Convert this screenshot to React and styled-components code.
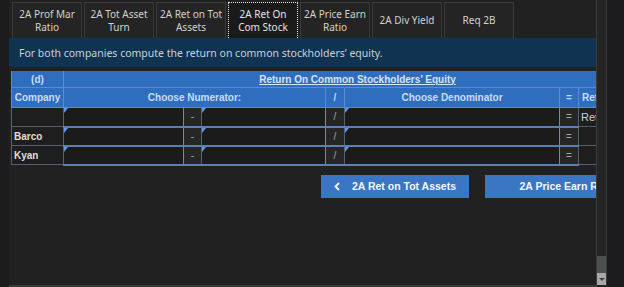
import React from "react";
import styled, { createGlobalStyle } from "styled-components";

const Global = createGlobalStyle`
  html, body { margin: 0; padding: 0; background: #1c1c1f; }
  body { width: 624px; height: 287px; overflow: hidden; }
`;

const Frame = styled.div`
  display: flex;
  width: 624px;
  height: 287px;
  background: #1c1c1f;
`;

const Panel = styled.div`
  width: 587px;
  margin-left: 9px;
  height: 285px;
  background: #212121;
  border-bottom: 2px solid #3a3a3a;
  overflow: hidden;
`;

const Tabs = styled.div`
  display: flex;
  gap: 2px;
  padding: 2px 0 0 3px;
  height: 36px;
`;

const Tab = styled.div`
  width: 70px;
  box-sizing: border-box;
  display: flex;
  align-items: center;
  justify-content: center;
  text-align: center;
  font-family: "Noto Sans", sans-serif;
  font-size: 10px;
  line-height: 13px;
  color: ${(p) => (p.active ? "#e4e4e4" : "#d2d2d2")};
  background: ${(p) => (p.active ? "#1a1a1a" : "#242424")};
  border: ${(p) => (p.active ? "1px dotted #e8e8e8" : "1px solid #3a3a3a")};
  border-bottom: none;
`;

const Banner = styled.div`
  height: 29px;
  display: flex;
  align-items: center;
  padding-left: 10px;
  background: #0f3350;
  color: #c8d2dc;
  font-family: "Noto Sans", sans-serif;
  font-size: 10.5px;
`;

const Table = styled.table`
  margin: 4px 0 0 2px;
  border-collapse: collapse;
  table-layout: fixed;
  width: 640px;
  font-family: "Liberation Sans", Arial, sans-serif;
  font-size: 10px;
  font-weight: bold;
`;

const Head = styled.th`
  background: #2f6ebf;
  color: #cbdcf2;
  height: ${(p) => p.h || 19}px;
  padding: 0;
  text-align: ${(p) => (p.left ? "left" : "center")};
  padding-left: ${(p) => (p.left ? "3px" : "0")};
  border: 1px solid #5c8ad0;
  border-top: none;
`;

const Title = styled.span`
  color: #d6e4f5;
  text-decoration: underline;
`;

const NameCell = styled.td`
  height: 18px;
  padding: 0 0 0 2px;
  background: #1e1e1e;
  color: #dedede;
  border: 1px solid #55606e;
`;

const OpCell = styled.td`
  background: #262626;
  color: #a8a8a8;
  text-align: center;
  font-weight: normal;
  border: 1px solid #55606e;
  border-bottom: 2px solid #5a80b4;
  padding: 0;
`;

const InputCell = styled.td`
  position: relative;
  background: #1b1b1b;
  border: 1px solid #5d8cc8;
  border-bottom: 2px solid #5a80b4;
  padding: 0;
  &::before {
    content: "";
    position: absolute;
    left: 0;
    top: 0;
    border-top: 5px solid #5e9ae6;
    border-right: 4px solid transparent;
  }
`;

const RetCell = styled.td`
  background: #1e1e1e;
  color: #cfcfcf;
  border: 1px solid #55606e;
  padding-left: 2px;
  font-weight: normal;
  font-size: 11px;
`;

const Nav = styled.div`
  display: flex;
  gap: 16px;
  padding: 9px 0 0 312px;
`;

const NavButton = styled.div`
  flex: none;
  width: ${(p) => p.w}px;
  height: 23px;
  display: flex;
  align-items: center;
  justify-content: center;
  gap: 12px;
  background: #3a76c3;
  color: #f2f6fb;
  font-family: "Liberation Sans", Arial, sans-serif;
  font-size: 10.5px;
  font-weight: bold;
`;

const Chevron = styled.svg`
  width: 6px;
  height: 9px;
  flex: none;
`;

const Scrollbar = styled.div`
  width: 9px;
  height: 287px;
  display: flex;
  flex-direction: column;
  background: #252525;
  border-left: 1px solid #3c3c3c;
  border-right: 1px solid #3c3c3c;
`;

const Track = styled.div`
  flex: 1;
`;

const Thumb = styled.div`
  height: 17px;
  background: #4a5150;
`;

const Arrow = styled.div`
  height: 12px;
  margin-bottom: 2px;
  background: #a8a8a8;
  display: flex;
  align-items: center;
  justify-content: center;
  &::after {
    content: "";
    border-top: 3px solid #444;
    border-left: 3px solid transparent;
    border-right: 3px solid transparent;
  }
`;

const tabs = [
  ["2A Prof Mar", "Ratio"],
  ["2A Tot Asset", "Turn"],
  ["2A Ret on Tot", "Assets"],
  ["2A Ret On", "Com Stock"],
  ["2A Price Earn", "Ratio"],
  ["2A Div Yield"],
  ["Req 2B"],
];

const rows = ["", "Barco", "Kyan"];

const ChevronIcon = ({ dir }) => (
  <Chevron viewBox="0 0 6 9">
    <path
      d={dir === "left" ? "M5 1 L1.5 4.5 L5 8" : "M1 1 L4.5 4.5 L1 8"}
      fill="none"
      stroke="#f2f6fb"
      strokeWidth="1.8"
    />
  </Chevron>
);

export default function App() {
  return (
    <>
      <Global />
      <Frame>
        <Panel>
          <Tabs>
            {tabs.map((t, i) => (
              <Tab key={i} active={i === 3}>
                <div>
                  {t[0]}
                  {t[1] && <br />}
                  {t[1]}
                </div>
              </Tab>
            ))}
          </Tabs>
          <Banner>For both companies compute the return on common stockholders’ equity.</Banner>
          <Table>
            <colgroup>
              <col style={{ width: 52 }} />
              <col style={{ width: 120 }} />
              <col style={{ width: 18 }} />
              <col style={{ width: 124 }} />
              <col style={{ width: 19 }} />
              <col style={{ width: 215 }} />
              <col style={{ width: 19 }} />
              <col style={{ width: 73 }} />
            </colgroup>
            <thead>
              <tr>
                <Head h={16}>(d)</Head>
                <Head h={16} colSpan={7}>
                  <Title>Return On Common Stockholders’ Equity</Title>
                </Head>
              </tr>
              <tr>
                <Head>Company</Head>
                <Head colSpan={3}>Choose Numerator:</Head>
                <Head>/</Head>
                <Head>Choose Denominator</Head>
                <Head>=</Head>
                <Head left>Ret</Head>
              </tr>
            </thead>
            <tbody>
              {rows.map((r, i) => (
                <tr key={i}>
                  <NameCell>{r}</NameCell>
                  <InputCell />
                  <OpCell>-</OpCell>
                  <InputCell />
                  <OpCell>/</OpCell>
                  <InputCell />
                  <OpCell>=</OpCell>
                  <RetCell>{i === 0 ? "Ret" : ""}</RetCell>
                </tr>
              ))}
            </tbody>
          </Table>
          <Nav>
            <NavButton w={148}>
              <ChevronIcon dir="left" />
              <span>2A Ret on Tot Assets</span>
            </NavButton>
            <NavButton w={184}>
              <span>2A Price Earn Ratio</span>
              <ChevronIcon dir="right" />
            </NavButton>
          </Nav>
        </Panel>
        <Scrollbar>
          <Track />
          <Thumb />
          <Arrow />
        </Scrollbar>
      </Frame>
    </>
  );
}
